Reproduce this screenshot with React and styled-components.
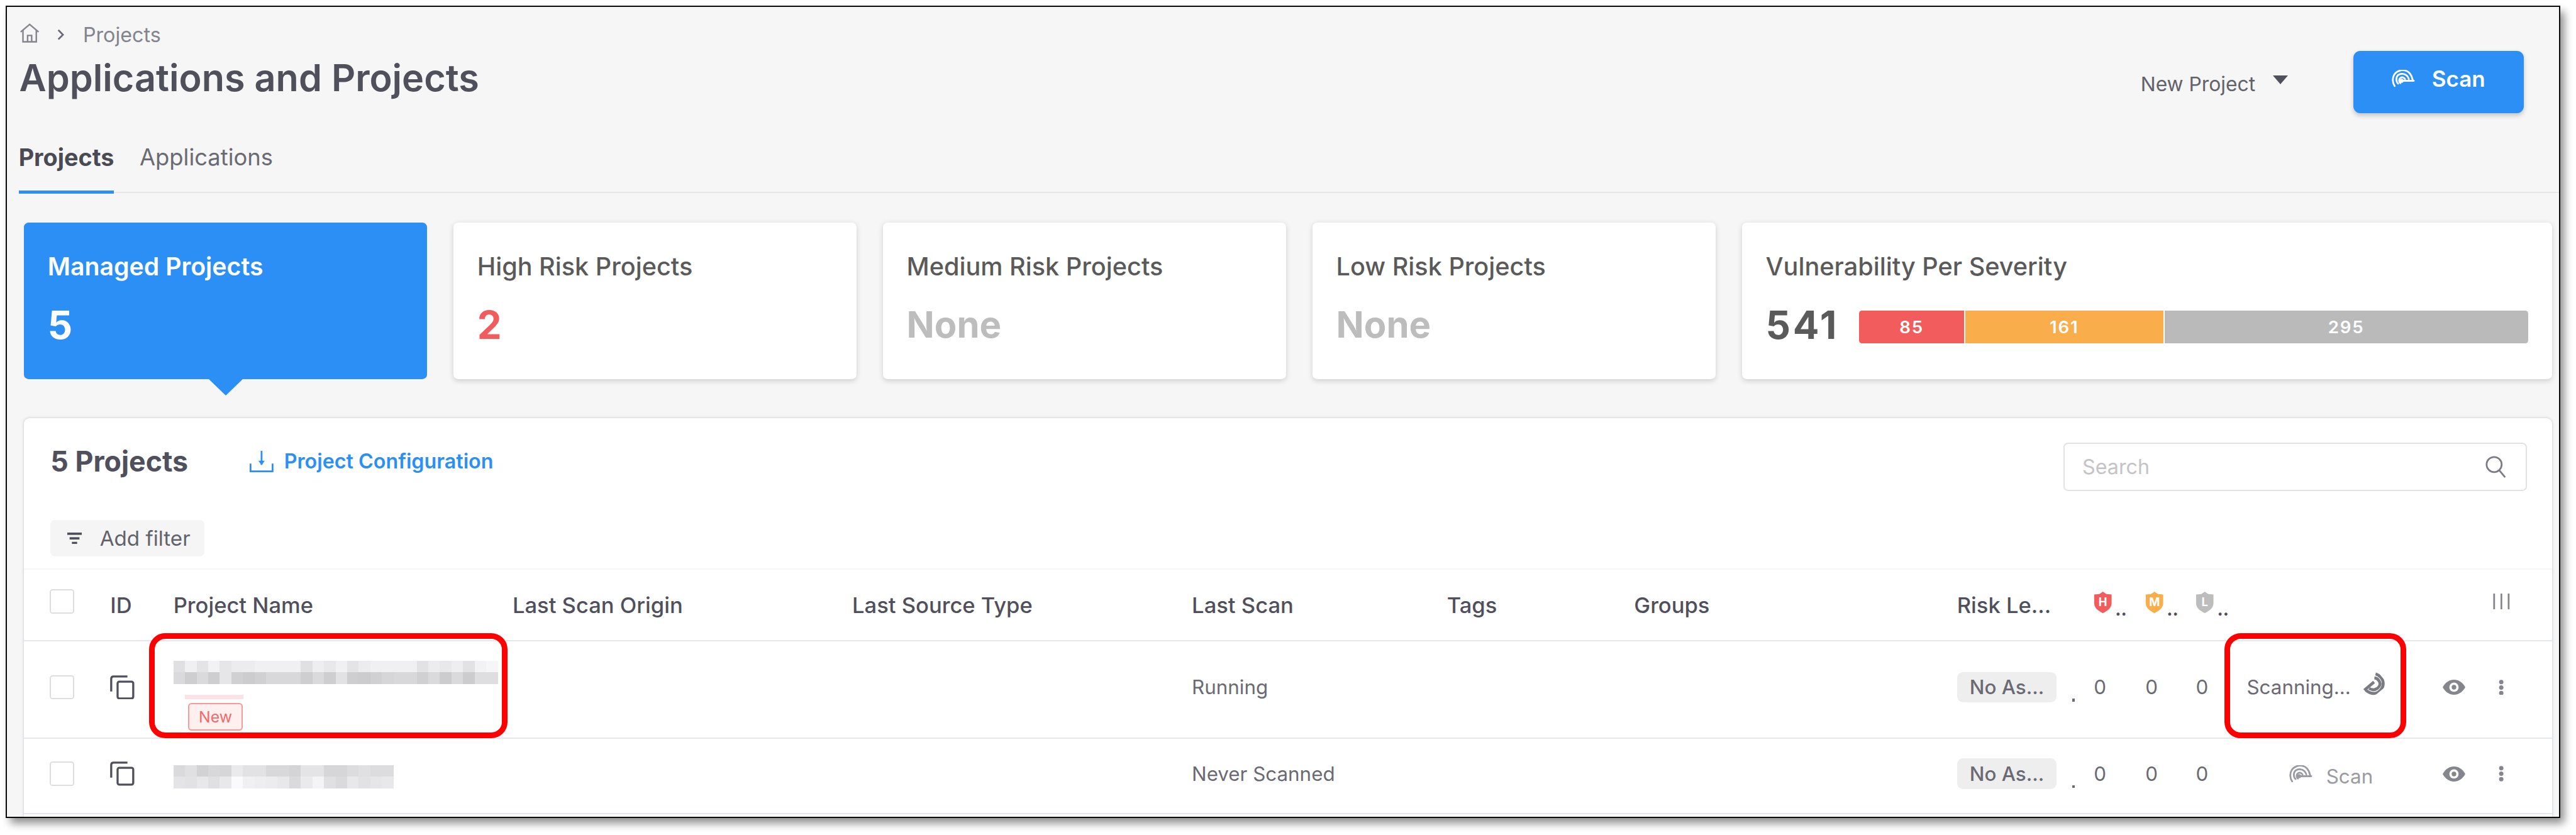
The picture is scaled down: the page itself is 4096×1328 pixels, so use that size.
import React from "react";
import styled, { createGlobalStyle } from "styled-components";

const GlobalStyle = createGlobalStyle`
  html, body {
    margin: 0;
    padding: 0;
    background: #fff;
    overflow: hidden;
    font-family: Inter, "Liberation Sans", sans-serif;
  }
  * {
    box-sizing: border-box;
  }
`;

// all sizes below are in reference pixels, the zoom brings them to the window
const Page = styled.div`
  width: 4444px;
  height: 1441px;
  padding: 10px 0 0 10px;
  zoom: ${4096 / 4444};
`;

const Frame = styled.div`
  width: 4407px;
  height: 1402px;
  border: 3px solid #0a0a0a;
  background: #f6f6f6;
  box-shadow: 8px 10px 14px rgba(0, 0, 0, 0.45);
  overflow: hidden;
  display: flex;
  flex-direction: column;
`;

const Header = styled.div`
  display: flex;
  justify-content: space-between;
  align-items: flex-start;
  padding: 24px 61px 0 21px;
`;

const Crumbs = styled.div`
  display: flex;
  align-items: center;
  height: 41px;
  color: #84848e;
  font-size: 35px;
`;

const CrumbText = styled.span`
  margin: 8px 0 0 32px;
`;

const Chevron = styled.svg`
  margin: 6px 0 0 29px;
`;

const Title = styled.h1`
  margin: 19px 0 0;
  font-size: 64.4px;
  line-height: 76px;
  font-weight: 600;
  color: #50505c;
`;

const Actions = styled.div`
  display: flex;
  align-items: center;
  padding-top: 52px;
`;

const NewProject = styled.div`
  display: flex;
  align-items: center;
  gap: 30px;
  margin: 6px 113px 0 0;
  font-size: 34.5px;
  color: #62626c;
`;

const Caret = styled.span`
  width: 0;
  height: 0;
  margin-top: -14px;
  border-left: 14px solid transparent;
  border-right: 14px solid transparent;
  border-top: 16px solid #50505c;
`;

const ScanButton = styled.button`
  width: 294px;
  height: 107px;
  padding: 0 0 12px;
  display: flex;
  align-items: center;
  justify-content: center;
  gap: 29px;
  background: #2b8ff5;
  border: none;
  border-radius: 12px;
  box-shadow: 0 4px 8px rgba(0, 0, 0, 0.2);
  color: #fff;
  font-family: inherit;
  font-size: 38px;
  font-weight: 600;
`;

const TabBar = styled.div`
  display: flex;
  gap: 44px;
  margin: 53px 0 0 20px;
  border-bottom: 3px solid #e8e8e8;
`;

const Tab = styled.div`
  height: 86px;
  margin-bottom: -3px;
  line-height: 46px;
  font-size: ${(p) => (p.$active ? 41 : 39.5)}px;
  font-weight: ${(p) => (p.$active ? 700 : 400)};
  color: ${(p) => (p.$active ? "#4a4a55" : "#6a6a74")};
  border-bottom: 6px solid ${(p) => (p.$active ? "#2b8ff5" : "transparent")};
`;

const Cards = styled.div`
  display: grid;
  grid-template-columns: repeat(4, 696px) 1398px;
  gap: 45px;
  margin: 51px 0 0 29px;
`;

const Card = styled.div`
  position: relative;
  height: 270px;
  padding: 51px 42px 0 41px;
  border-radius: 8px;
  background: ${(p) => (p.$active ? "#2b8ff5" : "#fff")};
  box-shadow: ${(p) => (p.$active ? "none" : "0 3px 9px rgba(0, 0, 0, 0.16)")};

  &::after {
    content: ${(p) => (p.$active ? '""' : "none")};
    position: absolute;
    top: 100%;
    left: 319px;
    border-left: 30px solid transparent;
    border-right: 30px solid transparent;
    border-top: 29px solid #2b8ff5;
  }
`;

const CardTitle = styled.div`
  line-height: 50px;
  font-size: ${(p) => (p.$active ? 42.6 : 43)}px;
  font-weight: ${(p) => (p.$active ? 600 : 500)};
  color: ${(p) => (p.$active ? "#fff" : "#5a5a5a")};
`;

const CardValue = styled.div`
  margin-top: 35px;
  line-height: 80px;
  font-size: ${(p) => (p.$small ? 63 : 67)}px;
  font-weight: 700;
  letter-spacing: ${(p) => (p.$spaced ? 4 : 0)}px;
  color: ${(p) => p.$color};
`;

const SeverityRow = styled.div`
  display: flex;
  align-items: center;
  gap: 35px;
`;

const Bar = styled.div`
  flex: 1;
  display: flex;
  gap: 2px;
  height: 56px;
  margin-top: 43px;
  border-radius: 5px;
  overflow: hidden;
`;

const Segment = styled.div`
  flex: ${(p) => p.$count} 0 0;
  display: flex;
  align-items: center;
  justify-content: center;
  background: ${(p) => p.$color};
  color: #fff;
  font-size: 30px;
  font-weight: 600;
  letter-spacing: 2px;
`;

const Panel = styled.div`
  position: relative;
  flex: 1;
  width: 4362px;
  margin: 67px 0 0 29px;
  padding-top: 42px;
  background: #fff;
  border-radius: 10px 10px 0 0;
  box-shadow: 0 0 5px rgba(70, 80, 100, 0.3);
`;

const Toolbar = styled.div`
  display: flex;
  justify-content: space-between;
  padding: 0 44px 0 46px;
`;

const ToolbarLeft = styled.div`
  display: flex;
  align-items: center;
  height: 56px;
  margin-top: 5px;
`;

const Count = styled.div`
  width: 344px;
  font-size: 48.5px;
  font-weight: 700;
  color: #50505c;
`;

const ConfigLink = styled.div`
  display: flex;
  align-items: center;
  gap: 18px;
  font-size: 35px;
  font-weight: 600;
  color: #2b8ff5;
`;

const SearchBox = styled.div`
  width: 799px;
  height: 83px;
  margin-top: 1px;
  display: flex;
  align-items: center;
  justify-content: space-between;
  padding: 0 33px 0 30px;
  border: 3px solid #e2e2e2;
  border-radius: 8px;
  font-size: 35px;
  color: #c4c4c8;
`;

const FilterRow = styled.div`
  padding: 50px 0 21px 46px;
  border-bottom: 3px solid #f7f7f7;
`;

const AddFilter = styled.div`
  width: 265px;
  height: 63px;
  display: flex;
  align-items: center;
  gap: 31px;
  padding-left: 29px;
  border-radius: 8px;
  background: #f5f5f5;
  font-size: 36px;
  color: #62626c;
`;

const columns =
  "104px 109px 585px 586px 586px 440px 323px 557px 236px 89px 87px 88px 338px 87px 1fr";

const HeadRow = styled.div`
  display: grid;
  grid-template-columns: ${columns};
  align-items: center;
  height: 123px;
  padding-left: 45px;
  border-bottom: 3px solid #e4e7eb;
  font-size: 37.500px;
  font-weight: 500;
  color: #50505c;
`;

const Row = styled.div`
  display: grid;
  grid-template-columns: ${columns};
  align-items: center;
  height: ${(p) => p.$height}px;
  padding: 0 0 7px 45px;
  border-bottom: 3px solid #e4e7eb;
  font-size: 34px;
  color: #6a6a74;
`;

const Checkbox = styled.span`
  display: block;
  width: 42px;
  height: 42px;
  margin-top: ${(p) => (p.$head ? -12 : 0)}px;
  border: 3px solid #dedede;
  border-radius: 5px;
`;

const ShieldCell = styled.div`
  display: flex;
  align-items: flex-end;
  gap: 5px;
  margin-top: -8px;
  color: #50505c;
  font-size: 30px;
  font-weight: 700;
  line-height: 14px;
`;

const ColumnsIcon = styled.svg`
  display: block;
  margin-top: -12px;
`;

const NameCell = styled.div`
  margin-top: ${(p) => p.$offset}px;
`;

const BlurRow = styled.div`
  display: flex;
  height: 20px;
`;

const BlurCell = styled.span`
  width: 20px;
  background: rgb(${(p) => p.$v}, ${(p) => p.$v}, ${(p) => p.$v + 3});
`;

const PinkStrip = styled.div`
  width: 101px;
  height: 7px;
  margin: 19px 0 0 20px;
  background: #fbe3e5;
`;

const NewBadge = styled.span`
  display: flex;
  align-items: center;
  justify-content: center;
  width: 95px;
  height: 48px;
  margin: 7px 0 0 25px;
  border: 3px solid #f79a9a;
  border-radius: 6px;
  background: #fff0f0;
  color: #f26a6a;
  font-size: 27px;
`;

const RiskCell = styled.div`
  display: flex;
  align-items: flex-end;
  gap: 27px;
`;

const RiskPill = styled.span`
  display: flex;
  align-items: center;
  justify-content: center;
  width: 172px;
  height: 53px;
  border-radius: 10px;
  background: #eeeeee;
  font-weight: 500;
  color: #6a6a74;
`;

const RiskDot = styled.span`
  width: 4px;
  height: 5px;
  margin-bottom: 2px;
  background: #6a6a74;
`;

const ActionCell = styled.div`
  display: flex;
  align-items: center;
  gap: ${(p) => p.$gap}px;
  padding-left: ${(p) => p.$indent}px;
`;

const ScanText = styled.span`
  margin-top: 10px;
  color: #9a9aa2;
`;

const Spinner = styled.svg`
  margin-top: -6px;
  transform: rotate(140deg);
`;

const Kebab = styled.svg`
  display: block;
  margin-left: 10px;
`;

const Highlight = styled.div`
  position: absolute;
  top: 371px;
  left: ${(p) => p.$left}px;
  width: ${(p) => p.$width}px;
  height: 182px;
  border: 10px solid #ff0000;
  border-radius: 28px;
`;

const HomeIcon = () => (
  <svg width="35" height="34" viewBox="0 0 35 34" fill="none" stroke="#85858d" strokeWidth="2.6">
    <path d="M2 15 17.5 2 33 15" />
    <path d="M6 12v20h23V12M14 32V21h7v11" />
  </svg>
);

const ScanIcon = ({ color }) => (
  <svg width="40" height="30" viewBox="0 0 40 30" fill="none" stroke={color} strokeWidth="3" strokeLinecap="round">
    <path d="M5 28C1 22 1 14 4 9 8 2 16 0 22 1c7 1 12 7 14 16" />
    <path d="M11 24c-4-4-4-11 0-15 4-3 11-3 15 1 2 2 3 4 3.500 6" />
    <path d="M15 23c-3-2-3-7 0-9 3-2 6-1 8 2" />
    <path d="M16 19h22" />
    <circle cx="17" cy="19" r="2" fill={color} />
  </svg>
);

const Eye = () => (
  <svg width="39" height="26" viewBox="0 0 39 26">
    <path d="M0 13C5 4 12 0 19.500 0S34 4 39 13c-5 9-12 13-19.500 13S5 22 0 13Z" fill="#85858d" />
    <circle cx="19.500" cy="13" r="8" fill="#fff" />
    <circle cx="19.500" cy="13" r="4" fill="#85858d" />
  </svg>
);

const Dots = () => (
  <Kebab width="9" height="27" viewBox="0 0 9 27" fill="#85858d">
    <circle cx="4.500" cy="4" r="3.800" />
    <circle cx="4.500" cy="13.500" r="3.800" />
    <circle cx="4.500" cy="23" r="3.800" />
  </Kebab>
);

const CopyIcon = () => (
  <svg width="42" height="42" viewBox="0 0 42 42" fill="none" stroke="#50505c" strokeWidth="3.600">
    <path d="M2 28V6q0-4 4-4h24" />
    <rect x="13" y="11" width="27" height="29" rx="3" />
  </svg>
);

const Shield = ({ color, letter }) => (
  <svg width="32" height="37" viewBox="0 0 32 37">
    <path d="M16 0l6 4 9 1v15c0 8-7 13-15 17C8 33 1 28 1 20V5l9-1Z" fill={color} />
    <text x="16" y="25" textAnchor="middle" fontSize="20" fontWeight="700" fill="#fff" fontFamily="Inter, sans-serif">
      {letter}
    </text>
  </svg>
);

const PROJECT_A = [
  [224, 240, 228, 242, 230, 236, 236, 240, 240, 240, 240, 224, 238, 232, 240, 228, 236, 240, 240, 240, 240, 226, 236, 232, 238, 226, 242, 246],
  [218, 206, 218, 206, 230, 208, 204, 208, 216, 216, 216, 206, 218, 206, 226, 206, 204, 208, 214, 216, 216, 208, 218, 204, 218, 204, 222, 222],
];

const PROJECT_B = [
  [218, 224, 210, 216, 214, 234, 226, 226, 216, 216, 212, 228, 228, 214, 214, 220, 224, 220, 220],
  [228, 226, 232, 224, 232, 250, 240, 238, 236, 232, 218, 234, 244, 224, 218, 232, 226, 230, 232],
];

const Blur = ({ rows }) =>
  rows.map((cells, i) => (
    <BlurRow key={i}>
      {cells.map((v, j) => (
        <BlurCell key={j} $v={v} />
      ))}
    </BlurRow>
  ));

const App = () => {
  return (
    <Page>
      <GlobalStyle />
      <Frame>
        <Header>
          <div>
            <Crumbs>
              <HomeIcon />
              <Chevron width="14" height="20" viewBox="0 0 14 20" fill="none" stroke="#6a6a74" strokeWidth="3">
                <path d="M3 2l8 8-8 8" />
              </Chevron>
              <CrumbText>Projects</CrumbText>
            </Crumbs>
            <Title>Applications and Projects</Title>
          </div>
          <Actions>
            <NewProject>
              New Project
              <Caret />
            </NewProject>
            <ScanButton>
              <ScanIcon color="#fff" />
              Scan
            </ScanButton>
          </Actions>
        </Header>

        <TabBar>
          <Tab $active>Projects</Tab>
          <Tab>Applications</Tab>
        </TabBar>

        <Cards>
          <Card $active>
            <CardTitle $active>Managed Projects</CardTitle>
            <CardValue $color="#fff">5</CardValue>
          </Card>
          <Card>
            <CardTitle>High Risk Projects</CardTitle>
            <CardValue $color="#f25c5c">2</CardValue>
          </Card>
          <Card>
            <CardTitle>Medium Risk Projects</CardTitle>
            <CardValue $color="#bdbdbd" $small>None</CardValue>
          </Card>
          <Card>
            <CardTitle>Low Risk Projects</CardTitle>
            <CardValue $color="#bdbdbd" $small>None</CardValue>
          </Card>
          <Card>
            <CardTitle>Vulnerability Per Severity</CardTitle>
            <SeverityRow>
              <CardValue $color="#5a5a5a" $spaced>541</CardValue>
              <Bar>
                <Segment $count={85} $color="#f25c5c">85</Segment>
                <Segment $count={161} $color="#f9ad4b">161</Segment>
                <Segment $count={295} $color="#bababa">295</Segment>
              </Bar>
            </SeverityRow>
          </Card>
        </Cards>

        <Panel>
          <Toolbar>
            <ToolbarLeft>
              <Count>5 Projects</Count>
              <ConfigLink>
                <svg width="41" height="37" viewBox="0 0 41 37" fill="none" stroke="#2b8ff5" strokeWidth="3">
                  <path d="M20.500 0v24" />
                  <path d="M15 17h11l-5.500 8Z" fill="#2b8ff5" stroke="none" />
                  <path d="M1.500 22v13.500h38V22" />
                </svg>
                Project Configuration
              </ConfigLink>
            </ToolbarLeft>
            <SearchBox>
              Search
              <svg width="36" height="38" viewBox="0 0 36 38" fill="none" stroke="#7b7b84" strokeWidth="3">
                <circle cx="15" cy="15" r="13" />
                <path d="M24 25l10 12" />
              </svg>
            </SearchBox>
          </Toolbar>

          <FilterRow>
            <AddFilter>
              <svg width="25" height="20" viewBox="0 0 25 20" fill="#50505c">
                <rect width="25" height="4" />
                <rect x="4" y="8" width="17" height="4" />
                <rect x="8" y="16" width="9" height="4" />
              </svg>
              Add filter
            </AddFilter>
          </FilterRow>

          <HeadRow>
            <Checkbox $head />
            <span>ID</span>
            <span>Project Name</span>
            <span>Last Scan Origin</span>
            <span>Last Source Type</span>
            <span>Last Scan</span>
            <span>Tags</span>
            <span>Groups</span>
            <span>Risk Le...</span>
            <ShieldCell>
              <Shield color="#f25c5c" letter="H" />
              ..
            </ShieldCell>
            <ShieldCell>
              <Shield color="#f9ad4b" letter="M" />
              ..
            </ShieldCell>
            <ShieldCell>
              <Shield color="#bdbdbd" letter="L" />
              ..
            </ShieldCell>
            <span />
            <span />
            <ColumnsIcon width="29" height="28" viewBox="0 0 29 28" stroke="#85858d" strokeWidth="3">
              <path d="M2 0v28M14.500 0v28M27 0v28" />
            </ColumnsIcon>
          </HeadRow>

          <Row $height={168}>
            <Checkbox />
            <CopyIcon />
            <NameCell $offset={30}>
              <Blur rows={PROJECT_A} />
              <PinkStrip />
              <NewBadge>New</NewBadge>
            </NameCell>
            <span />
            <span />
            <span>Running</span>
            <span />
            <span />
            <RiskCell>
              <RiskPill>No As...</RiskPill>
              <RiskDot />
            </RiskCell>
            <span>0</span>
            <span>0</span>
            <span>0</span>
            <ActionCell $gap={20} $indent={0}>
              Scanning...
              <Spinner width="40" height="30" viewBox="0 0 40 30" fill="none" stroke="#7b7b84" strokeWidth="5">
                <path d="M5 28C1 22 1 14 4 9 8 2 16 0 22 1c7 1 12 7 14 16" />
                <path d="M11 24c-4-4-4-11 0-15 4-3 11-3 15 1 2 2 3 4 3.500 6" />
                <path d="M16 19h22" />
              </Spinner>
            </ActionCell>
            <Eye />
            <Dots />
          </Row>

          <Row $height={131}>
            <Checkbox />
            <CopyIcon />
            <NameCell $offset={10}>
              <Blur rows={PROJECT_B} />
            </NameCell>
            <span />
            <span />
            <span>Never Scanned</span>
            <span />
            <span />
            <RiskCell>
              <RiskPill>No As...</RiskPill>
              <RiskDot />
            </RiskCell>
            <span>0</span>
            <span>0</span>
            <span>0</span>
            <ActionCell $gap={24} $indent={73}>
              <ScanIcon color="#9a9aa2" />
              <ScanText>Scan</ScanText>
            </ActionCell>
            <Eye />
            <Dots />
          </Row>

          <Highlight $left={216} $width={618} />
          <Highlight $left={3796} $width={314} />
        </Panel>
      </Frame>
    </Page>
  );
};

export default App;
